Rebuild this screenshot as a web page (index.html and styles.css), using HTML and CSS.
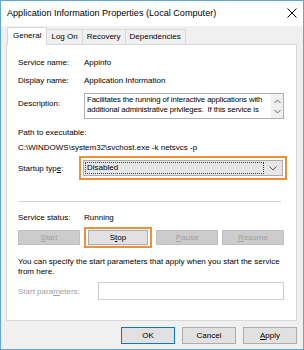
FILE: index.html
```html
<!DOCTYPE html>
<html>
<head>
<meta charset="utf-8">
<link rel="stylesheet" href="styles.css">
</head>
<body>
<div class="window">
  <div class="titlebar">
    <span class="title">Application Information Properties (Local Computer)</span>
    <svg class="close" width="10" height="10" viewBox="0 0 10 10"><path d="M0.5 0.5 L9.5 9.5 M9.5 0.5 L0.5 9.5" stroke="#000" stroke-width="1" fill="none"/></svg>
  </div>
  <div class="client">
    <div class="tabs">
      <div class="tab active">General</div>
      <div class="tab">Log On</div>
      <div class="tab">Recovery</div>
      <div class="tab">Dependencies</div>
    </div>
    <div class="panel">
      <div class="row r1"><span class="lbl">Service name:</span><span>Appinfo</span></div>
      <div class="row r2"><span class="lbl">Display name:</span><span>Application Information</span></div>
      <div class="row desc-row">
        <span class="lbl desc-lbl">Description:</span>
        <div class="desc">
          <div class="desc-text">Facilitates the running of interactive applications with additional administrative privileges.&nbsp; If this service is</div>
          <div class="scroll">
            <svg width="7" height="5" viewBox="0 0 7 5"><path d="M0.5 4 L3.5 1 L6.5 4" stroke="#606060" fill="none"/></svg>
            <svg width="7" height="5" viewBox="0 0 7 5"><path d="M0.5 1 L3.5 4 L6.5 1" stroke="#606060" fill="none"/></svg>
          </div>
        </div>
      </div>
      <div class="path-lbl">Path to executable:</div>
      <div class="path">C:\WINDOWS\system32\svchost.exe -k netsvcs -p</div>
      <div class="row startup">
        <span class="lbl">Startup typ<u>e</u>:</span>
        <div class="hl combo-hl">
          <div class="combo">
            <span class="focus">Disabled</span>
            <svg width="8" height="5" viewBox="0 0 8 5"><path d="M0.5 0.5 L4 4 L7.5 0.5" stroke="#555" fill="none"/></svg>
          </div>
        </div>
      </div>
      <div class="sep"></div>
      <div class="row status"><span class="lbl">Service status:</span><span>Running</span></div>
      <div class="btnrow">
        <div class="btn dis"><u>S</u>tart</div>
        <div class="hl btn-hl"><div class="btn"><span>S<u>t</u>op</span></div></div>
        <div class="btn dis"><u>P</u>ause</div>
        <div class="btn dis"><u>R</u>esume</div>
      </div>
      <div class="info">You can specify the start parameters that apply when you start the service from here.</div>
      <div class="row params">
        <span class="lbl2">Start para<u>m</u>eters:</span>
        <div class="input"></div>
      </div>
    </div>
    <div class="footer">
      <div class="fbtn ok">OK</div>
      <div class="fbtn">Cancel</div>
      <div class="fbtn"><u>A</u>pply</div>
    </div>
  </div>
</div>
</body>
</html>
```

FILE: styles.css
```css
* { box-sizing: border-box; }
html, body { margin: 0; padding: 0; }
body {
  font-family: "Liberation Sans", Arial, sans-serif;
  font-size: 8px;
  color: #000;
  background: #fff;
}
u { text-decoration: underline; text-underline-offset: 1px; }
.window {
  width: 304px;
  height: 350px;
  border: 1px solid #5ea6dc;
  background: #f0f0f0;
  display: flex;
  flex-direction: column;
}
.titlebar {
  height: 25px;
  background: #fff;
  display: flex;
  align-items: center;
  justify-content: space-between;
  padding: 0 6px 1px 6px;
  flex: none;
}
.title { font-size: 9.1px; }
.client {
  flex: 1;
  padding: 1px 6px 0 5px;
  display: flex;
  flex-direction: column;
}
.tabs {
  display: flex;
  align-items: flex-end;
  height: 17px;
  padding-left: 1px;
  position: relative;
  z-index: 1;
}
.tab {
  height: 15px;
  line-height: 14px;
  padding: 0 4px;
  border: 1px solid #d9d9d9;
  border-bottom: none;
  border-left: none;
  background: #f0f0f0;
}
.tab.active {
  height: 18px;
  margin-bottom: -1px;
  background: #fff;
  border-left: 1px solid #d9d9d9;
  line-height: 16px;
  padding: 0 5px;
}
.panel {
  height: 277px;
  background: #fff;
  border: 1px solid #d9d9d9;
  padding: 11px 13px 0 11px;
  display: flex;
  flex-direction: column;
}
.row { display: flex; align-items: center; line-height: 13px; }
.lbl { width: 66px; flex: none; }
.r2 { margin-top: 5px; }
.desc-row { margin-top: 6px; align-items: flex-start; }
.desc-lbl { margin-top: 4px; }
.desc {
  flex: 1;
  height: 26px;
  border: 1px solid #abadb3;
  display: flex;
  margin-right: -1px;
}
.desc-text {
  flex: 1;
  line-height: 10px;
  padding: 1px 1px 1px 2px;
  overflow: hidden;
  letter-spacing: -0.12px;
  font-size: 7.8px;
}
.scroll {
  width: 12px;
  background: #f0f0f0;
  display: flex;
  flex-direction: column;
  align-items: center;
  justify-content: space-around;
  padding: 2px 0;
}
.path-lbl { margin-top: 7px; line-height: 13px; }
.path { margin-top: 2px; line-height: 13px; }
.startup { margin-top: 2px; }
.startup .lbl { width: 61px; }
.hl {
  border: 2px solid #f0903a;
  padding: 2px;
  background: #fff;
}
.combo-hl { flex: 1; margin-right: -4px; }
.combo {
  height: 16px;
  background: #e6e6e6;
  border: 1px solid #adadad;
  display: flex;
  align-items: center;
  padding: 0 5px 0 1px;
}
.focus {
  flex: 1;
  border: 1px dotted #444;
  height: 12px;
  line-height: 10px;
  padding-left: 1px;
  margin-right: 5px;
}
.sep {
  height: 1px;
  background: #d4d4d4;
  margin: 21px 2px 0 0;
}
.status { margin-top: 9px; }
.btnrow {
  display: flex;
  align-items: center;
  justify-content: space-between;
  margin-top: 3px;
  margin-right: -1px;
}
.btn {
  width: 62px;
  height: 15px;
  border: 1px solid #adadad;
  background: #e1e1e1;
  text-align: center;
  line-height: 13px;
}
.btn.dis {
  background: #cccccc;
  border-color: #bfbfbf;
  color: #a0a0a0;
}
.btn-hl { padding: 1px 2px; }
.btn-hl .btn { width: 60px; }
.info { margin-top: 9px; line-height: 10px; }
.params { margin-top: 5px; }
.lbl2 { width: 80px; flex: none; color: #a0a0a0; }
.input {
  flex: 1;
  height: 18px;
  border: 1px solid #cfcfcf;
  background: #fff;
  margin-right: -1px;
}
.footer {
  display: flex;
  justify-content: flex-end;
  gap: 7px;
  padding: 6px 0 0;
}
.fbtn {
  width: 54px;
  height: 17px;
  border: 1px solid #adadad;
  background: #e1e1e1;
  text-align: center;
  line-height: 15px;
}
.fbtn.ok { border-color: #0078d7; }
```
